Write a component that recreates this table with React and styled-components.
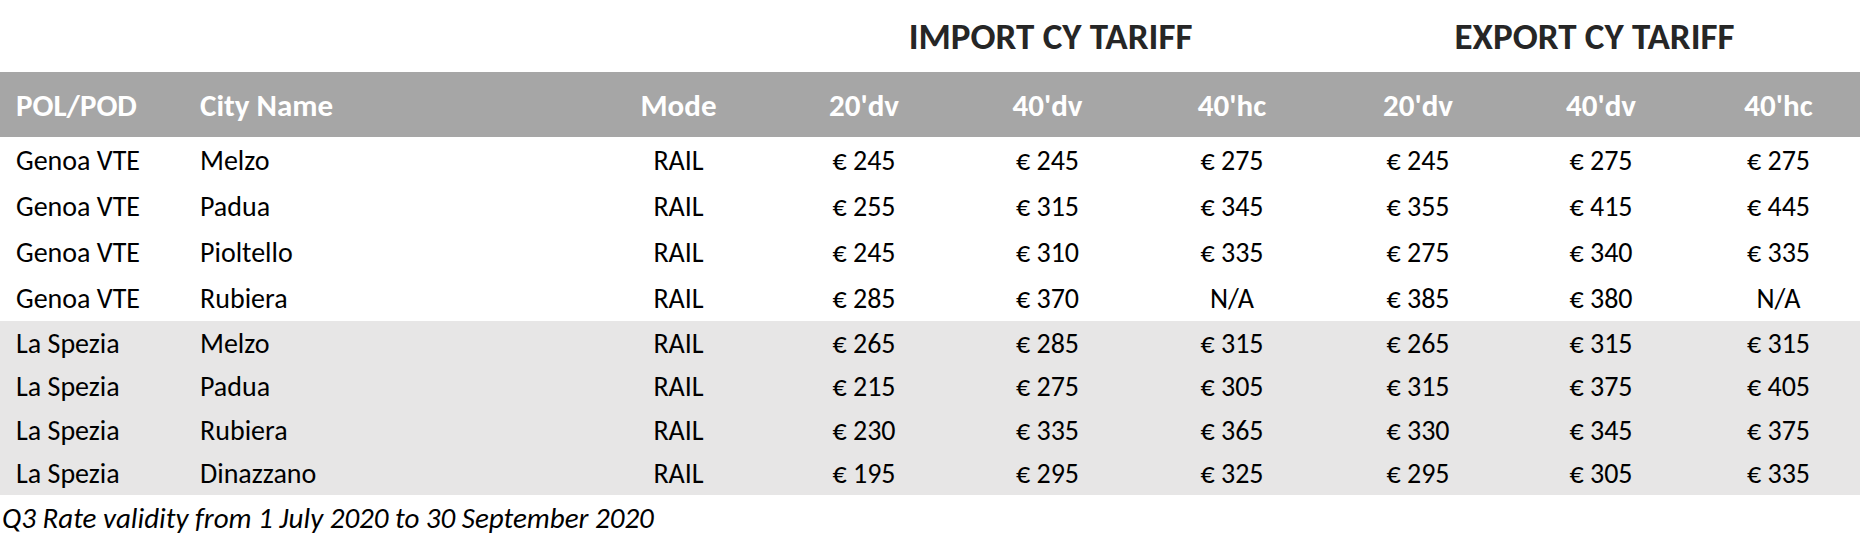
import React from "react";
import styled, { createGlobalStyle } from "styled-components";

const GlobalStyle = createGlobalStyle`
  html, body {
    margin: 0;
    padding: 0;
    background: #ffffff;
  }
  body {
    font-family: Calibri, Carlito, "Lato", "Liberation Sans", sans-serif;
    color: #000000;
  }
`;

const COLUMNS = "200px 385px 187px 184px 183px 186px 186px 180px 169px";

const rates = [
  { pol: "Genoa VTE", city: "Melzo", imp: ["€ 245", "€ 245", "€ 275"], exp: ["€ 245", "€ 275", "€ 275"] },
  { pol: "Genoa VTE", city: "Padua", imp: ["€ 255", "€ 315", "€ 345"], exp: ["€ 355", "€ 415", "€ 445"] },
  { pol: "Genoa VTE", city: "Pioltello", imp: ["€ 245", "€ 310", "€ 335"], exp: ["€ 275", "€ 340", "€ 335"] },
  { pol: "Genoa VTE", city: "Rubiera", imp: ["€ 285", "€ 370", "N/A"], exp: ["€ 385", "€ 380", "N/A"] },
  { pol: "La Spezia", city: "Melzo", imp: ["€ 265", "€ 285", "€ 315"], exp: ["€ 265", "€ 315", "€ 315"] },
  { pol: "La Spezia", city: "Padua", imp: ["€ 215", "€ 275", "€ 305"], exp: ["€ 315", "€ 375", "€ 405"] },
  { pol: "La Spezia", city: "Rubiera", imp: ["€ 230", "€ 335", "€ 365"], exp: ["€ 330", "€ 345", "€ 375"] },
  { pol: "La Spezia", city: "Dinazzano", imp: ["€ 195", "€ 295", "€ 325"], exp: ["€ 295", "€ 305", "€ 335"] },
];

const sizes = ["20'dv", "40'dv", "40'hc"];

export default function App() {
  return (
    <>
      <GlobalStyle />
      <Sheet>
        <TitleRow>
          <Title $span="4 / 7">IMPORT CY TARIFF</Title>
          <Title $span="7 / 10">EXPORT CY TARIFF</Title>
        </TitleRow>
        <HeaderRow>
          <Cell $align="left">POL/POD</Cell>
          <Cell $align="left" $pad="0">City Name</Cell>
          <Cell>Mode</Cell>
          {[...sizes, ...sizes].map((s, i) => (
            <Cell key={i} $last={i === 5}>{s}</Cell>
          ))}
        </HeaderRow>
        {rates.map((r, i) => (
          <DataRow key={i} $shaded={r.pol === "La Spezia"}>
            <Cell $align="left">{r.pol}</Cell>
            <Cell $align="left" $pad="0">{r.city}</Cell>
            <Cell>RAIL</Cell>
            {[...r.imp, ...r.exp].map((v, j) => (
              <Cell key={j} $last={j === 5}>{v}</Cell>
            ))}
          </DataRow>
        ))}
        <Note>Q3 Rate validity from 1 July 2020 to 30 September 2020</Note>
      </Sheet>
    </>
  );
}

const Sheet = styled.div`
  width: 1860px;
  display: flex;
  flex-direction: column;
`;

const Row = styled.div`
  display: grid;
  grid-template-columns: ${COLUMNS};
  align-items: center;
`;

const TitleRow = styled(Row)`
  height: 72px;
`;

const Title = styled.div`
  grid-column: ${(p) => p.$span};
  text-align: center;
  font-weight: 700;
  font-size: 37px;
  color: #262626;
  padding-left: 4px;
`;

const HeaderRow = styled(Row)`
  height: 65px;
  background: #a6a6a6;
  color: #ffffff;
  font-weight: 700;
  font-size: 31px;
`;

const DataRow = styled(Row)`
  height: ${(p) => (p.$shaded ? "43.5px" : "46px")};
  background: ${(p) => (p.$shaded ? "#e7e6e6" : "#ffffff")};
  font-size: 28px;
`;

const Cell = styled.div`
  text-align: ${(p) => p.$align || "center"};
  padding-left: ${(p) => (p.$align === "left" ? p.$pad || "16px" : p.$last ? "6px" : "0")};
  white-space: nowrap;
  line-height: 1;
  padding-top: 2px;
`;

const Note = styled.div`
  font-style: italic;
  font-size: 29px;
  padding: 9px 0 0 2px;
  line-height: 1;
`;
